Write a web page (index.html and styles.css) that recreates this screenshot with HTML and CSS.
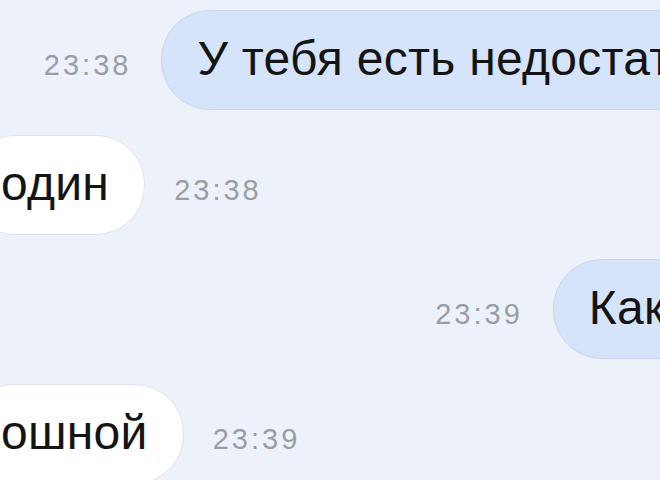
FILE: index.html
```html
<!DOCTYPE html>
<html lang="ru">
<head>
    <meta charset="UTF-8">
    <meta name="viewport" content="width=device-width, initial-scale=1.0">
    <title>Переписка</title>
    <link rel="stylesheet" href="styles.css">
</head>
<body>
    <div class="chat">
        <div class="row out">
            <span class="time">23:38</span>
            <div class="bubble">У тебя есть недостатки?</div>
        </div>

        <div class="row in">
            <div class="bubble">один</div>
            <span class="time">23:38</span>
        </div>

        <div class="row out">
            <span class="time">23:39</span>
            <div class="bubble">Какой?</div>
        </div>

        <div class="row in">
            <div class="bubble">ошной</div>
            <span class="time">23:39</span>
        </div>
    </div>
</body>
</html>
```

FILE: styles.css
```css
body {
    font-family: 'Liberation Sans', Arial, sans-serif;
    background-color: #edf2fa;
    margin: 0;
    height: 480px;
    overflow: hidden;
}
.chat {
    display: flex;
    flex-direction: column;
    gap: 24.5px;
    padding-top: 10px;
    margin-left: -35px;
    width: 818px;
}
.row {
    display: flex;
    align-items: baseline;
}
.row.out {
    justify-content: flex-end;
    gap: 30px;
}
.row.in {
    justify-content: flex-start;
    gap: 29px;
}
.bubble {
    font-size: 48px;
    letter-spacing: 0.3px;
    line-height: 56px;
    padding: 20px 35px 22px;
    border-radius: 49px;
    white-space: nowrap;
    color: #141414;
}
.out .bubble {
    background-color: #d5e4fa;
    border: 1px solid #c6d6ee;
}
.in .bubble {
    background-color: #ffffff;
    border: 1px solid #dde3eb;
}
.time {
    font-size: 29px;
    letter-spacing: 3px;
    color: #9a9ea4;
}
```
